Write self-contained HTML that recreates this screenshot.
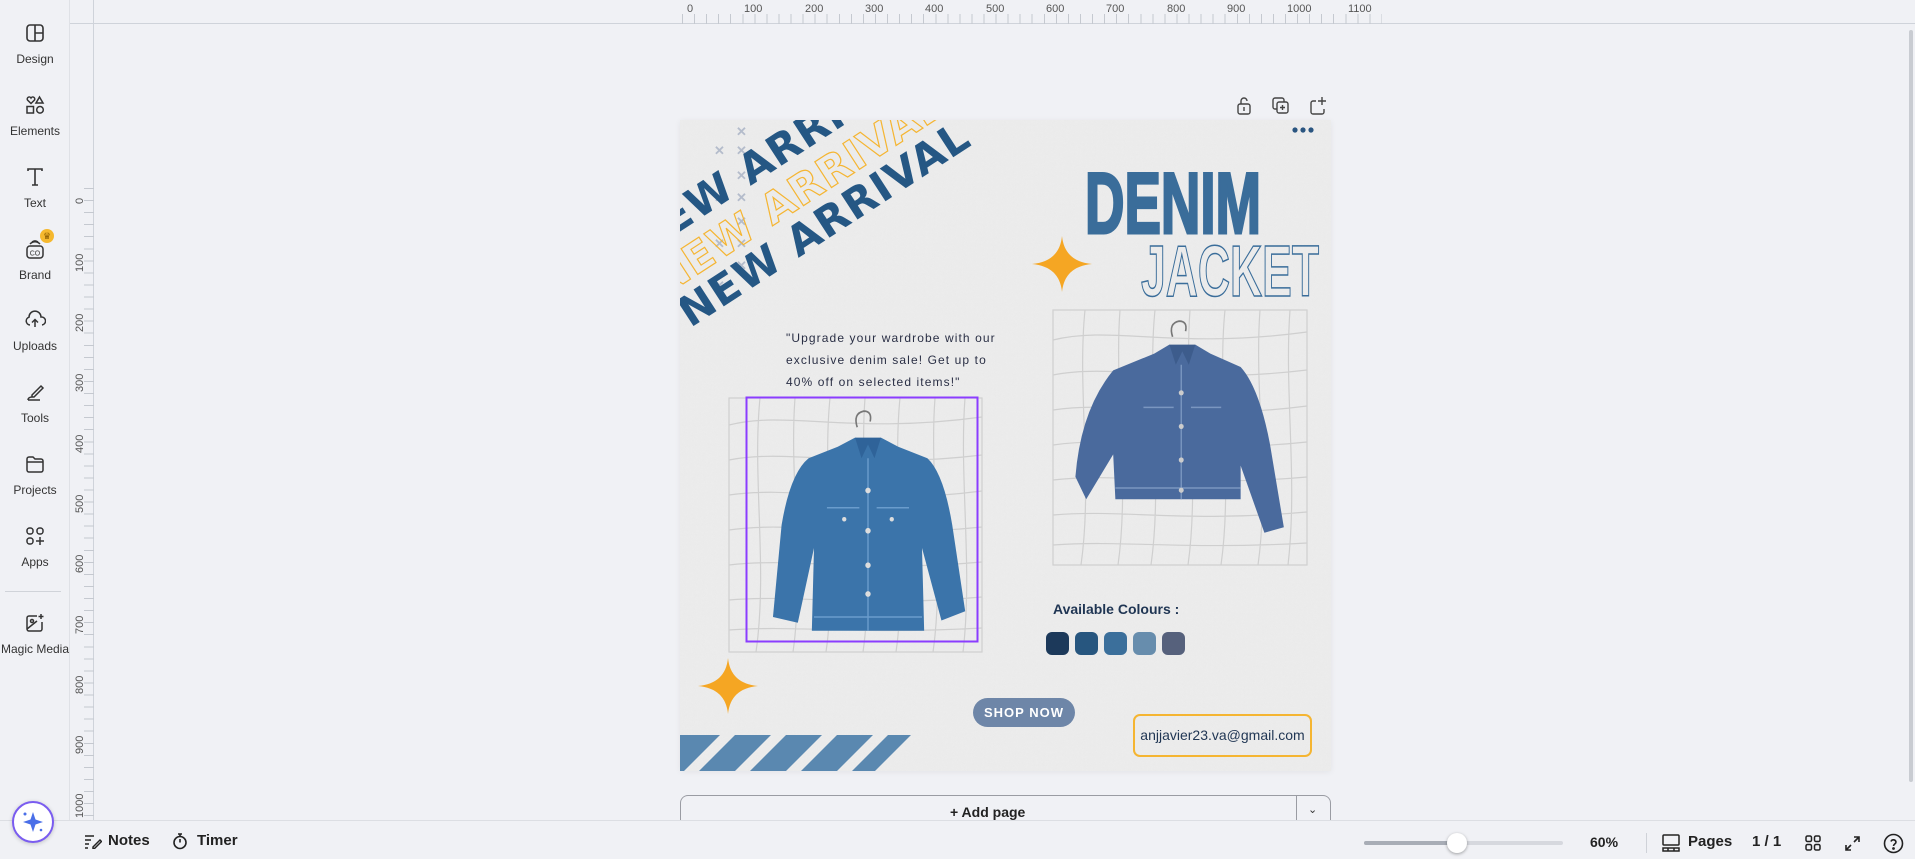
<!DOCTYPE html>
<html><head><meta charset="utf-8">
<style>
*{margin:0;padding:0;box-sizing:border-box}
body{width:1915px;height:859px;overflow:hidden;background:#f0f1f5;font-family:"Liberation Sans",sans-serif;position:relative;color:#222}
.abs{position:absolute}
.side{left:0;top:0;width:70px;height:820px;background:#f0f1f5;border-right:1px solid #dfe1e6}
.item{position:absolute;left:0;width:70px;text-align:center;font-size:12px;color:#333}
.item svg{display:block;margin:0 auto 8px}
.rt{left:70px;top:0;width:1845px;height:24px;border-bottom:1px solid #cfd3da;background:#f0f1f5}
.rl{left:70px;top:0;width:24px;height:820px;border-right:1px solid #cfd3da;background:#f0f1f5}
.tl{position:absolute;font-size:11px;color:#555;top:3px}
.vl{position:absolute;font-size:11px;color:#555;transform:rotate(-90deg);transform-origin:left top;left:74px}
.canvas{left:680px;top:120px;width:651px;height:651px;background:#ececeb;overflow:hidden;box-shadow:0 1px 6px rgba(0,0,0,.06)}
.bottom{left:0;top:820px;width:1915px;height:39px;background:#f0f1f5;border-top:1px solid #dcdee3}
.na{position:absolute;transform-origin:left bottom;transform:rotate(-33deg);font-family:"DejaVu Sans",sans-serif;font-weight:bold;font-size:42px;white-space:nowrap;letter-spacing:1px;line-height:1}
</style></head><body>

<div class="abs rt">
<div class="abs" style="left:0;top:0;width:24px;height:24px;border-right:1px solid #cfd3da"></div>
<div class="tl" style="left:617px">0</div><div class="tl" style="left:674px">100</div><div class="tl" style="left:735px">200</div><div class="tl" style="left:795px">300</div><div class="tl" style="left:855px">400</div><div class="tl" style="left:916px">500</div><div class="tl" style="left:976px">600</div><div class="tl" style="left:1036px">700</div><div class="tl" style="left:1097px">800</div><div class="tl" style="left:1157px">900</div><div class="tl" style="left:1217px">1000</div><div class="tl" style="left:1278px">1100</div>
<div class="abs" style="left:612px;top:14px;width:700px;height:10px;background:repeating-linear-gradient(90deg,#c5c9d0 0 1px,transparent 1px 12.06px)"></div>
</div>
<div class="abs rl" style="top:24px;height:796px"></div>
<div class="abs" style="left:84px;top:188px;width:10px;height:632px;background:repeating-linear-gradient(180deg,#c5c9d0 0 1px,transparent 1px 12.06px)"></div>
<div class="vl" style="top:204px">0</div><div class="vl" style="top:272px">100</div><div class="vl" style="top:332px">200</div><div class="vl" style="top:392px">300</div><div class="vl" style="top:453px">400</div><div class="vl" style="top:513px">500</div><div class="vl" style="top:573px">600</div><div class="vl" style="top:634px">700</div><div class="vl" style="top:694px">800</div><div class="vl" style="top:754px">900</div><div class="vl" style="top:818px">1000</div>

<div class="abs side">
<div class="item" style="top:22px"><svg width="22" height="22" viewBox="0 0 22 22" fill="none" stroke="#333" stroke-width="1.6"><rect x="3" y="3" width="16" height="16" rx="3"/><path d="M11 3v16M11 11h8"/></svg>Design</div>
<div class="item" style="top:94px"><svg width="22" height="22" viewBox="0 0 22 22" fill="none" stroke="#333" stroke-width="1.5"><path d="M7 9.5L3.5 6a2 2 0 013.5-2 2 2 0 013.5 2z"/><path d="M15.5 3l3.5 6h-7z"/><rect x="3" y="12.5" width="6.5" height="6.5"/><circle cx="16" cy="15.8" r="3.3"/></svg>Elements</div>
<div class="item" style="top:166px"><svg width="22" height="22" viewBox="0 0 22 22" fill="none" stroke="#333" stroke-width="1.6"><path d="M4 5V3h14v2M11 3v16M8 19h6"/></svg>Text</div>
<div class="item" style="top:238px"><svg width="22" height="22" viewBox="0 0 22 22" fill="none" stroke="#333" stroke-width="1.5"><rect x="3" y="8" width="16" height="12" rx="3"/><path d="M6 6c3-3 7-3 10 0M8 4c2-1.5 4-1.5 6 0"/><text x="11" y="17.5" font-size="7" text-anchor="middle" fill="#333" stroke="none" font-family="Liberation Sans">CO</text></svg>Brand</div>
<div class="abs" style="left:40px;top:229px;width:14px;height:14px;border-radius:50%;background:#f5b82e;color:#8a5a00;font-size:9px;text-align:center;line-height:14px">♛</div>
<div class="item" style="top:309px"><svg width="22" height="22" viewBox="0 0 22 22" fill="none" stroke="#333" stroke-width="1.5"><path d="M6 16a4 4 0 01-1-7.8A6 6 0 0117 8a4 4 0 011 8M11 18v-7M8 13.5l3-3 3 3"/></svg>Uploads</div>
<div class="item" style="top:381px"><svg width="22" height="22" viewBox="0 0 22 22" fill="none" stroke="#333" stroke-width="1.5"><path d="M8 14l9-9 2 2-9 9H8zM4 19h12M4 19c0-2 2-3 4-3"/></svg>Tools</div>
<div class="item" style="top:453px"><svg width="22" height="22" viewBox="0 0 22 22" fill="none" stroke="#333" stroke-width="1.5"><path d="M3 6a2 2 0 012-2h4l2 2h6a2 2 0 012 2v9a2 2 0 01-2 2H5a2 2 0 01-2-2z M3 9h16"/></svg>Projects</div>
<div class="item" style="top:525px"><svg width="22" height="22" viewBox="0 0 22 22" fill="none" stroke="#333" stroke-width="1.5"><rect x="3" y="3" width="6" height="6" rx="2.5"/><rect x="13" y="3" width="6" height="6" rx="2.5"/><rect x="3" y="13" width="6" height="6" rx="2.5"/><path d="M16 12v8M12 16h8"/></svg>Apps</div>
<div class="abs" style="left:5px;top:591px;width:56px;height:1px;background:#d0d3d9"></div>
<div class="item" style="top:612px"><svg width="22" height="22" viewBox="0 0 22 22" fill="none" stroke="#333" stroke-width="1.5"><path d="M13 4H5a2 2 0 00-2 2v11a2 2 0 002 2h11a2 2 0 002-2V10"/><circle cx="8" cy="9" r="1.5"/><path d="M3 17l10-8M17 2v5M14.5 4.5h5"/></svg>Magic Media</div>
</div>

<svg class="abs" style="left:1236px;top:96px" width="95" height="20" viewBox="0 0 95 20" fill="none" stroke="#444" stroke-width="1.4">
<rect x="2" y="8" width="12" height="10" rx="2"/><path d="M5 8V5a3 3 0 016 0M8 11v4"/>
<rect x="37" y="2" width="11" height="11" rx="2"/><rect x="41" y="6" width="11" height="11" rx="2" fill="#f0f1f5"/><path d="M46.5 9v5M44 11.5h5"/>
<path d="M80 5h-3a2 2 0 00-2 2v9a2 2 0 002 2h9a2 2 0 002-2v-3M86 1v8M82 5h8"/></svg>

<div class="abs canvas">
<svg class="abs" style="left:0;top:0" width="651" height="651">
<defs><filter id="n"><feTurbulence baseFrequency="0.9" numOctaves="2" seed="3"/><feColorMatrix values="0 0 0 0 0.5 0 0 0 0 0.5 0 0 0 0 0.5 0 0 0 0.07 0"/></filter></defs>
<rect width="651" height="651" fill="#ececec"/><rect width="651" height="651" filter="url(#n)"/>
<g fill="#b4bccb" font-size="13" font-family="Liberation Sans" font-weight="bold">
<text x="56" y="16">✕</text><text x="34" y="35">✕</text><text x="56" y="35">✕</text><text x="56" y="60">✕</text><text x="56" y="82">✕</text><text x="34" y="82">✕</text><text x="56" y="106">✕</text><text x="34" y="128">✕</text><text x="56" y="128">✕</text><text x="56" y="150">✕</text><text x="34" y="170">✕</text>
</g>
<g stroke="#cfcfcf" fill="none" stroke-width="1.2">
<rect x="49" y="278" width="253" height="254"/>
<path d="M49 305c60-15 120 10 253-8M49 340c60-12 130 10 253-5M49 375c70-10 130 12 253-4M49 410c70-10 130 10 253-3M49 445c70-8 130 8 253-3M49 480c70-6 130 8 253-3M49 510c70-5 130 5 253-2M80 278c-8 80 8 170-4 254M115 278c-6 80 10 170-2 254M150 278c-8 80 8 170-4 254M185 278c-6 80 10 170-2 254M220 278c-8 80 8 170-4 254M255 278c-6 80 10 170-2 254M285 278c-6 80 8 170-2 254"/>
<rect x="373" y="190" width="254" height="255"/>
<path d="M373 220c60-15 120 10 254-8M373 255c60-12 130 10 254-5M373 290c70-10 130 12 254-4M373 325c70-10 130 10 254-3M373 360c70-8 130 8 254-3M373 395c70-6 130 8 254-3M373 425c70-5 130 5 254-2M405 190c-8 80 8 170-4 255M440 190c-6 80 10 170-2 255M475 190c-8 80 8 170-4 255M510 190c-6 80 10 170-2 255M545 190c-8 80 8 170-4 255M580 190c-6 80 10 170-2 255M610 190c-6 80 8 170-2 255"/>
</g>
<g transform="translate(80,290) scale(1.08,1.15)">
<path d="M90 15q-4-12 6-14q8 0 6 9" stroke="#777" fill="none" stroke-width="1.5"/>
<path d="M72 32L88 24L100 30L112 24L128 32L155 42Q170 55 178 100L190 175L168 183L150 120L152 192L48 192L50 120L35 185L12 180L20 100Q28 55 45 42Z" fill="#3b74aa"/>
<path d="M88 24L94 42L100 30L106 42L112 24" fill="#2f6399"/>
<path d="M100 42V192M62 85h30M108 85h30M50 180h100" stroke="#6a9ccc" stroke-width="1.3" fill="none"/>
<g fill="#ddd"><circle cx="100" cy="70" r="2.5"/><circle cx="100" cy="105" r="2.5"/><circle cx="100" cy="135" r="2.5"/><circle cx="100" cy="160" r="2.5"/><circle cx="78" cy="95" r="2"/><circle cx="122" cy="95" r="2"/></g>
</g>
<g transform="translate(390,200) scale(1.08,1.12)">
<path d="M95 15q-4-12 6-14q8 0 6 9" stroke="#777" fill="none" stroke-width="1.5"/>
<path d="M78 30L92 22L104 28L116 22L130 30L158 42Q175 60 185 110L198 185L180 190L158 130L158 160L42 160L40 120L15 160L5 140Q10 80 40 45Z" fill="#4a6a9d"/>
<path d="M92 22L98 40L104 28L110 40L116 22" fill="#3d5c8c"/>
<path d="M103 40V160M68 78h28M112 78h28M42 150h116" stroke="#7a96c0" stroke-width="1.3" fill="none"/>
<g fill="#ccc"><circle cx="103" cy="65" r="2.3"/><circle cx="103" cy="95" r="2.3"/><circle cx="103" cy="125" r="2.3"/><circle cx="103" cy="152" r="2.3"/></g>
</g>
<rect x="66.5" y="277.5" width="231" height="244" fill="none" stroke="#8b3dff" stroke-width="2"/>
<path d="M382 116Q384.5 141.5 412 144Q384.5 146.5 382 172Q379.5 146.5 352 144Q379.5 141.5 382 116Z" fill="#f5a623"/>
<path d="M48 538Q50.5 563.5 78 566Q50.5 568.5 48 594Q45.5 568.5 18 566Q45.5 563.5 48 538Z" fill="#f5a623"/>
<g fill="#5a88b0"><path d="M0 615h40l-36 36H0z"/><path d="M55 615h36l-36 36H19z"/><path d="M106 615h36l-36 36H70z"/><path d="M157 615h36l-36 36h-36z"/><path d="M208 615h23l-36 36h-23z"/></g>
<g fill="#2a5580"><circle cx="615" cy="10" r="2.6"/><circle cx="623" cy="10" r="2.6"/><circle cx="631" cy="10" r="2.6"/></g>
<text x="461" y="176" font-family="Liberation Sans" font-weight="bold" font-size="72" fill="none" stroke="#3a6d9a" stroke-width="1.5" textLength="178" lengthAdjust="spacingAndGlyphs">JACKET</text>
<text x="405" y="113" font-family="Liberation Sans" font-weight="bold" font-size="86" fill="#3a6d9a" stroke="#3a6d9a" stroke-width="3" textLength="176" lengthAdjust="spacingAndGlyphs">DENIM</text>
</svg>
<div class="na" style="left:-34px;top:100px;color:#255784">NEW ARRIVAL</div>
<div class="na" style="left:-12px;top:140px;color:transparent;-webkit-text-stroke:1.2px #f5b532">NEW ARRIVAL</div>
<div class="na" style="left:14px;top:172px;color:#255784">NEW ARRIVAL</div>
<div class="abs" style="left:106px;top:207px;font-size:12px;letter-spacing:1.1px;line-height:22px;color:#2a2f45;width:226px">"Upgrade your wardrobe with our exclusive denim sale! Get up to 40% off on selected items!"</div>
<div class="abs" style="left:373px;top:481px;font-size:14px;font-weight:bold;color:#1f3553">Available Colours :</div>
<div class="abs" style="left:366px;top:512px;width:23px;height:23px;border-radius:6px;background:#1c395a"></div>
<div class="abs" style="left:395px;top:512px;width:23px;height:23px;border-radius:6px;background:#27567f"></div>
<div class="abs" style="left:424px;top:512px;width:23px;height:23px;border-radius:6px;background:#3b6f9b"></div>
<div class="abs" style="left:453px;top:512px;width:23px;height:23px;border-radius:6px;background:#678dad"></div>
<div class="abs" style="left:482px;top:512px;width:23px;height:23px;border-radius:6px;background:#56617c"></div>
<div class="abs" style="left:293px;top:578px;width:102px;height:29px;border-radius:15px;background:#6e86a8;color:#fff;font-weight:bold;font-size:13px;letter-spacing:1px;text-align:center;line-height:29px">SHOP NOW</div>
<div class="abs" style="left:453px;top:594px;width:179px;height:43px;border:2px solid #f5b532;border-radius:7px;font-size:14px;color:#1f3553;text-align:center;line-height:39px">anjjavier23.va@gmail.com</div>
</div>

<div class="abs" style="left:680px;top:795px;width:651px;height:30px;border:1px solid #9a9ca3;border-bottom:none;border-radius:8px 8px 0 0;background:#f0f1f5"></div>
<div class="abs" style="left:1296px;top:795px;width:1px;height:25px;background:#9a9ca3"></div>
<div class="abs" style="left:950px;top:804px;font-size:14px;font-weight:bold;color:#222">+ Add page</div>
<div class="abs" style="left:1308px;top:803px;font-size:11px;color:#333">⌄</div>
<div class="abs" style="left:1909px;top:30px;width:4px;height:752px;border-radius:2px;background:#c9ccd2"></div>

<div class="abs bottom">
<svg class="abs" style="left:84px;top:12px" width="18" height="16" viewBox="0 0 18 16" fill="none" stroke="#222" stroke-width="1.5"><path d="M1 3h9M1 7h6M1 11h4M1 15h3M9 14l7-7 1.5 1.5-7 7H9z"/></svg>
<div class="abs" style="left:108px;top:11px;font-size:15px;font-weight:bold">Notes</div>
<svg class="abs" style="left:172px;top:11px" width="16" height="18" viewBox="0 0 16 18" fill="none" stroke="#222" stroke-width="1.6"><circle cx="8" cy="10.5" r="6"/><path d="M6 2h4M8 2v2M8 10.5V7"/></svg>
<div class="abs" style="left:197px;top:11px;font-size:15px;font-weight:bold">Timer</div>
<div class="abs" style="left:1364px;top:20px;width:199px;height:4px;border-radius:2px;background:#d6d8de"></div>
<div class="abs" style="left:1364px;top:20px;width:93px;height:4px;border-radius:2px;background:#a8adb6"></div>
<div class="abs" style="left:1447px;top:12px;width:20px;height:20px;border-radius:50%;background:#fff;box-shadow:0 1px 3px rgba(0,0,0,.35)"></div>
<div class="abs" style="left:1590px;top:13px;font-size:14px;font-weight:bold">60%</div>
<div class="abs" style="left:1646px;top:12px;width:1px;height:20px;background:#cfd2d8"></div>
<svg class="abs" style="left:1661px;top:12px" width="20" height="20" viewBox="0 0 20 20" fill="none" stroke="#222" stroke-width="1.5"><rect x="2" y="2" width="16" height="10" rx="1"/><path d="M2 15h16v3H2zM7 15v3M13 15v3"/></svg>
<div class="abs" style="left:1688px;top:12px;font-size:15px;font-weight:bold">Pages</div>
<div class="abs" style="left:1752px;top:12px;font-size:15px;font-weight:bold">1 / 1</div>
<svg class="abs" style="left:1805px;top:14px" width="16" height="16" viewBox="0 0 16 16" fill="none" stroke="#222" stroke-width="1.5"><rect x="1" y="1" width="5.5" height="5.5" rx="1.5"/><rect x="9.5" y="1" width="5.5" height="5.5" rx="1.5"/><rect x="1" y="9.5" width="5.5" height="5.5" rx="1.5"/><rect x="9.5" y="9.5" width="5.5" height="5.5" rx="1.5"/></svg>
<svg class="abs" style="left:1844px;top:14px" width="17" height="17" viewBox="0 0 17 17" fill="none" stroke="#222" stroke-width="1.6"><path d="M10 2h5v5M15 2l-5 5M7 15H2v-5M2 15l5-5"/></svg>
<svg class="abs" style="left:1883px;top:12px" width="21" height="21" viewBox="0 0 21 21" fill="none" stroke="#222" stroke-width="1.6"><circle cx="10.5" cy="10.5" r="9"/><path d="M8 8.5a2.6 2.6 0 015 .5c0 2-2.5 2-2.5 4"/><circle cx="10.5" cy="15.5" r=".6" fill="#222"/></svg>
</div>

<div class="abs" style="left:12px;top:801px;width:42px;height:42px;border-radius:50%;background:#fff;border:2px solid #7a5cf0;box-shadow:0 1px 4px rgba(0,0,0,.2);z-index:5">
<svg width="38" height="38" viewBox="0 0 38 38"><path d="M19 9l2.5 7.5L29 19l-7.5 2.5L19 29l-2.5-7.5L9 19l7.5-2.5z" fill="#4a6fe8"/><circle cx="11" cy="11" r="1.5" fill="#4a6fe8"/><circle cx="27" cy="27" r="1.3" fill="#4a6fe8"/></svg></div>
</body></html>
